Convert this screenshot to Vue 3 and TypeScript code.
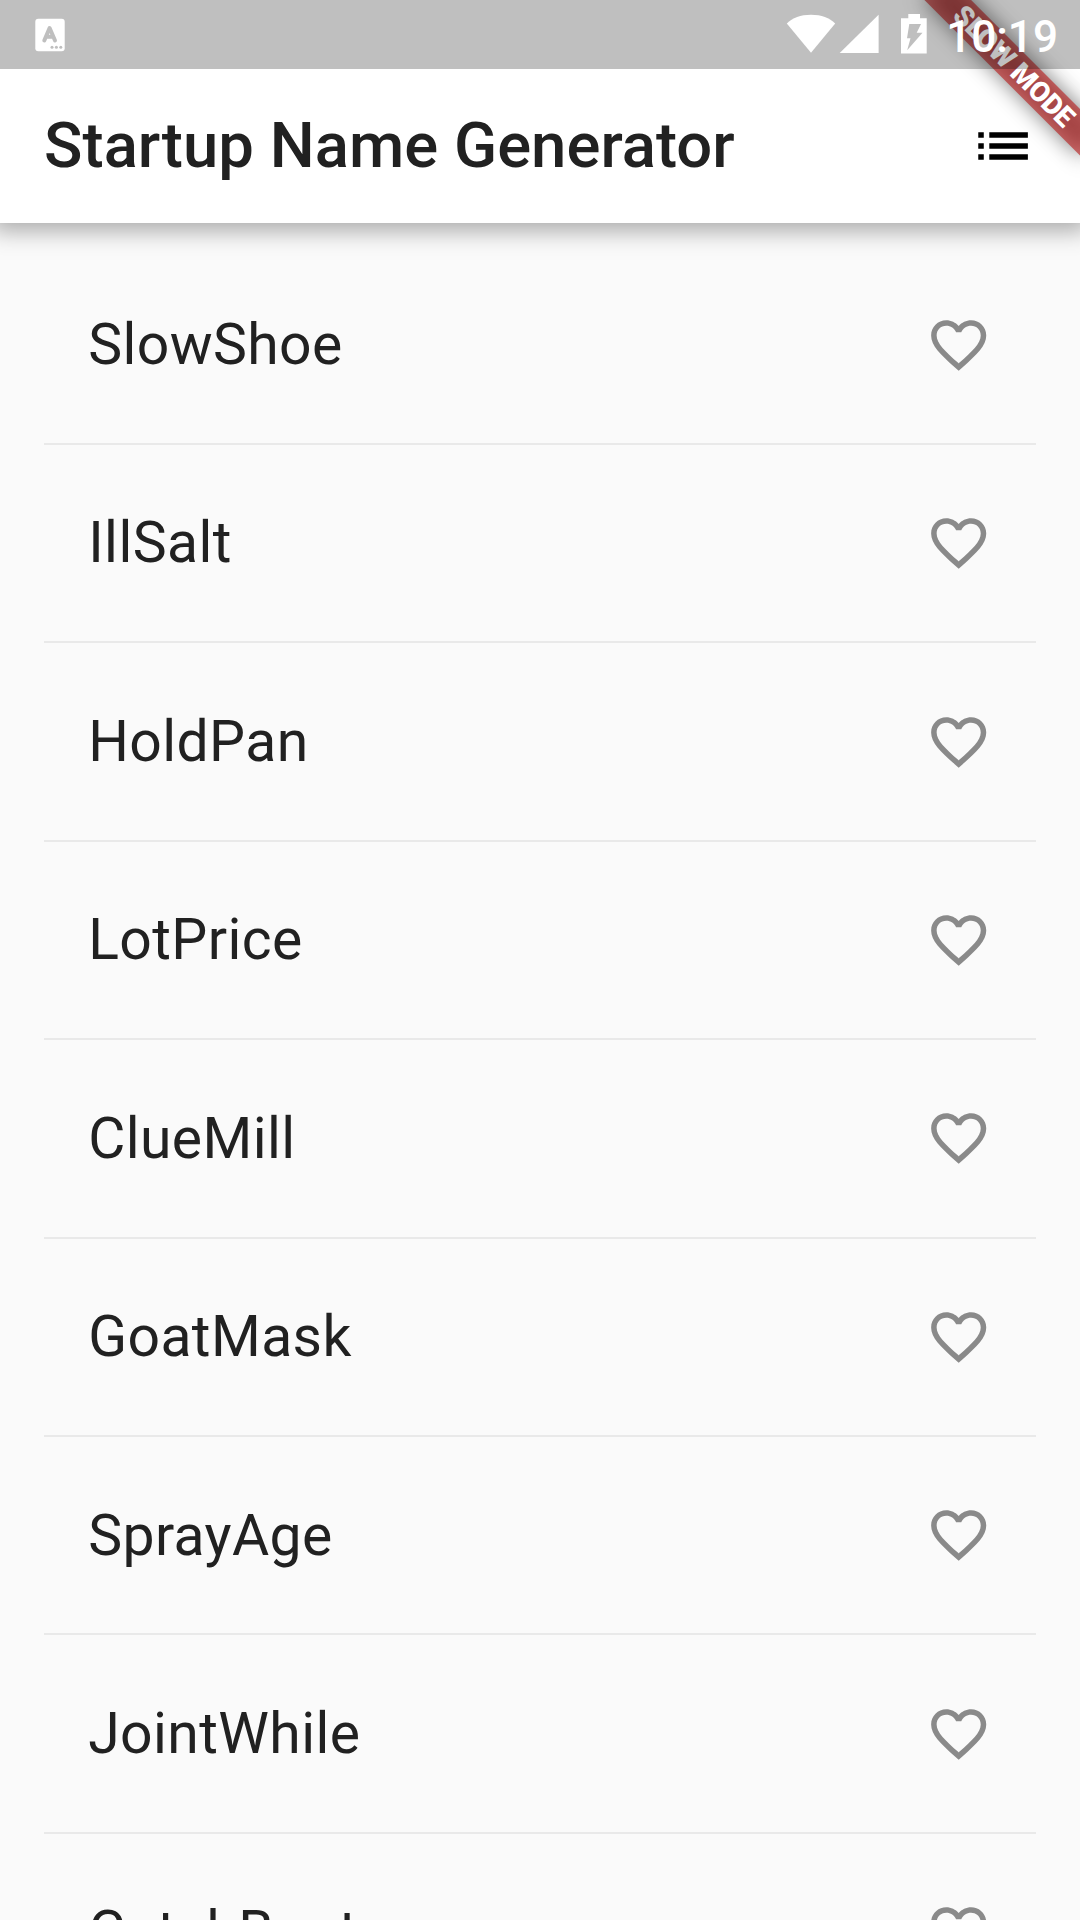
<script setup lang="ts">
const names: string[] = [
  'SlowShoe',
  'IllSalt',
  'HoldPan',
  'LotPrice',
  'ClueMill',
  'GoatMask',
  'SprayAge',
  'JointWhile',
  'CatchBoat',
]
</script>

<template>
  <div class="screen">
    <header class="app-bar">
      <h1 class="title">Startup Name Generator</h1>
      <svg class="icon" viewBox="0 0 24 24" aria-hidden="true">
        <path d="M3 13h2v-2H3v2zm0 4h2v-2H3v2zm0-8h2V7H3v2zm4 4h14v-2H7v2zm0 4h14v-2H7v2zM7 7v2h14V7H7z" />
      </svg>
    </header>

    <main class="list">
      <template v-for="name in names" :key="name">
        <div class="tile">
          <span class="name">{{ name }}</span>
          <svg class="icon heart" viewBox="0.14 0 24 24" aria-hidden="true">
            <path
              d="M16.5 3c-1.74 0-3.41.81-4.5 2.09C10.91 3.81 9.24 3 7.5 3 4.42 3 2 5.42 2 8.5c0 3.78 3.4 6.86 8.55 11.54L12 21.35l1.45-1.32C18.6 15.36 22 12.28 22 8.5 22 5.42 19.58 3 16.5 3zm-4.4 15.55l-.1.1-.1-.1C7.14 14.24 4 11.39 4 8.5 4 6.5 5.5 5 7.5 5c1.54 0 3.04.99 3.57 2.36h1.87C13.46 5.99 14.96 5 16.5 5c2 0 3.5 1.5 3.5 3.5 0 2.89-3.14 5.74-7.9 10.05z"
            />
          </svg>
        </div>
        <div class="divider"></div>
      </template>
    </main>

    <div class="ribbon-anchor">
      <div class="ribbon-shadow"></div>
      <div class="ribbon">SLOW MODE</div>
    </div>

    <div class="status-bar">
      <svg class="notice" viewBox="0 0 30 34" aria-hidden="true">
        <rect x="0.3" y="0.8" width="29.4" height="32.4" rx="3" fill="#fff" />
        <path d="M9.3 22.5L14.6 10L20 22.5M11.3 18.7H18" fill="none" stroke="#bfbfbf" stroke-width="4" stroke-linecap="round" stroke-linejoin="round" />
        <g fill="#bfbfbf">
          <circle cx="17" cy="29.2" r="1.5" />
          <circle cx="21.4" cy="29.2" r="1.5" />
          <circle cx="25.8" cy="29.2" r="1.5" />
        </g>
      </svg>
      <svg class="signals" viewBox="0 0 142 40" aria-hidden="true">
        <path d="M0.8 9.6C6.5 4 14.5 0.8 25 0.8S43.500 4 49.200 9.600L25 38.700Z" />
        <path d="M92.600 0.700V39H53.700Z" />
        <path fill-rule="evenodd" d="M122.300 0h11.700v4.300h6.700V39.500h-25.700V4.300h7.300zM123.300 10L121 24.200H124.500L121.200 36.300L136.500 18.700H130.700L135 10Z" />
      </svg>
      <span class="clock">10:19</span>
    </div>
  </div>
</template>

<style>
body {
  margin: 0;
}
</style>

<style scoped>
.screen {
  position: relative;
  display: flex;
  flex-direction: column;
  width: 1080px;
  height: 1920px;
  overflow: hidden;
  background: #fafafa;
  color: #212121;
  font-family: Roboto, 'Liberation Sans', sans-serif;
}

.app-bar {
  position: relative;
  z-index: 1;
  flex: none;
  box-sizing: border-box;
  display: flex;
  align-items: center;
  justify-content: space-between;
  height: 223.35px;
  padding: 69px 44.1px 0;
  background: #fff;
  box-shadow: 0 0 22px 8px rgba(0, 0, 0, 0.32);
}

.title {
  margin: 0 0 2px;
  font-size: 63.4px;
  font-weight: 500;
  line-height: 74px;
  letter-spacing: 0.03px;
  white-space: nowrap;
}

.icon {
  flex: none;
  width: 66.15px;
  height: 66.15px;
  fill: #000;
}

.heart {
  margin-top: 0.3px;
  fill: #8a8a8a;
}

.list {
  padding: 44.1px;
}

.tile {
  display: flex;
  align-items: center;
  justify-content: space-between;
  height: 154.35px;
  padding: 0 44.1px;
}

.name {
  margin-bottom: 0.3px;
  font-size: 57.05px;
  line-height: 67px;
  letter-spacing: 0.41px;
}

.divider {
  display: flex;
  align-items: center;
  height: 44.1px;
}

.divider::before {
  content: '';
  flex: 1;
  height: 2px;
  background: #e9e9e9;
}

.ribbon-anchor {
  position: absolute;
  z-index: 2;
  top: 0;
  left: 1080px;
  width: 0;
  height: 0;
  transform: rotate(45deg);
}

.ribbon,
.ribbon-shadow {
  position: absolute;
  left: -110.25px;
  top: 77.175px;
  width: 220.5px;
  height: 33.075px;
}

.ribbon-shadow {
  background: rgba(0, 0, 0, 0.5);
  filter: blur(10.9px);
}

.ribbon {
  background: rgba(183, 28, 28, 0.627);
  color: #fff;
  font-size: 28.1px;
  font-weight: 900;
  line-height: 33px;
  letter-spacing: -0.3px;
  text-align: center;
  white-space: nowrap;
}

.status-bar {
  position: absolute;
  z-index: 3;
  top: 0;
  left: 0;
  box-sizing: border-box;
  display: flex;
  align-items: center;
  width: 1080px;
  height: 69px;
  padding: 0 22px 0 35px;
  background: rgba(0, 0, 0, 0.25);
  color: #fff;
}

.notice {
  width: 30px;
  height: 34px;
}

.signals {
  width: 142px;
  height: 40px;
  margin: 0 0 2px auto;
  fill: #fff;
}

.clock {
  margin: 4px 0 0 18px;
  font-size: 44.1px;
  font-weight: 500;
  line-height: 52px;
}
</style>
